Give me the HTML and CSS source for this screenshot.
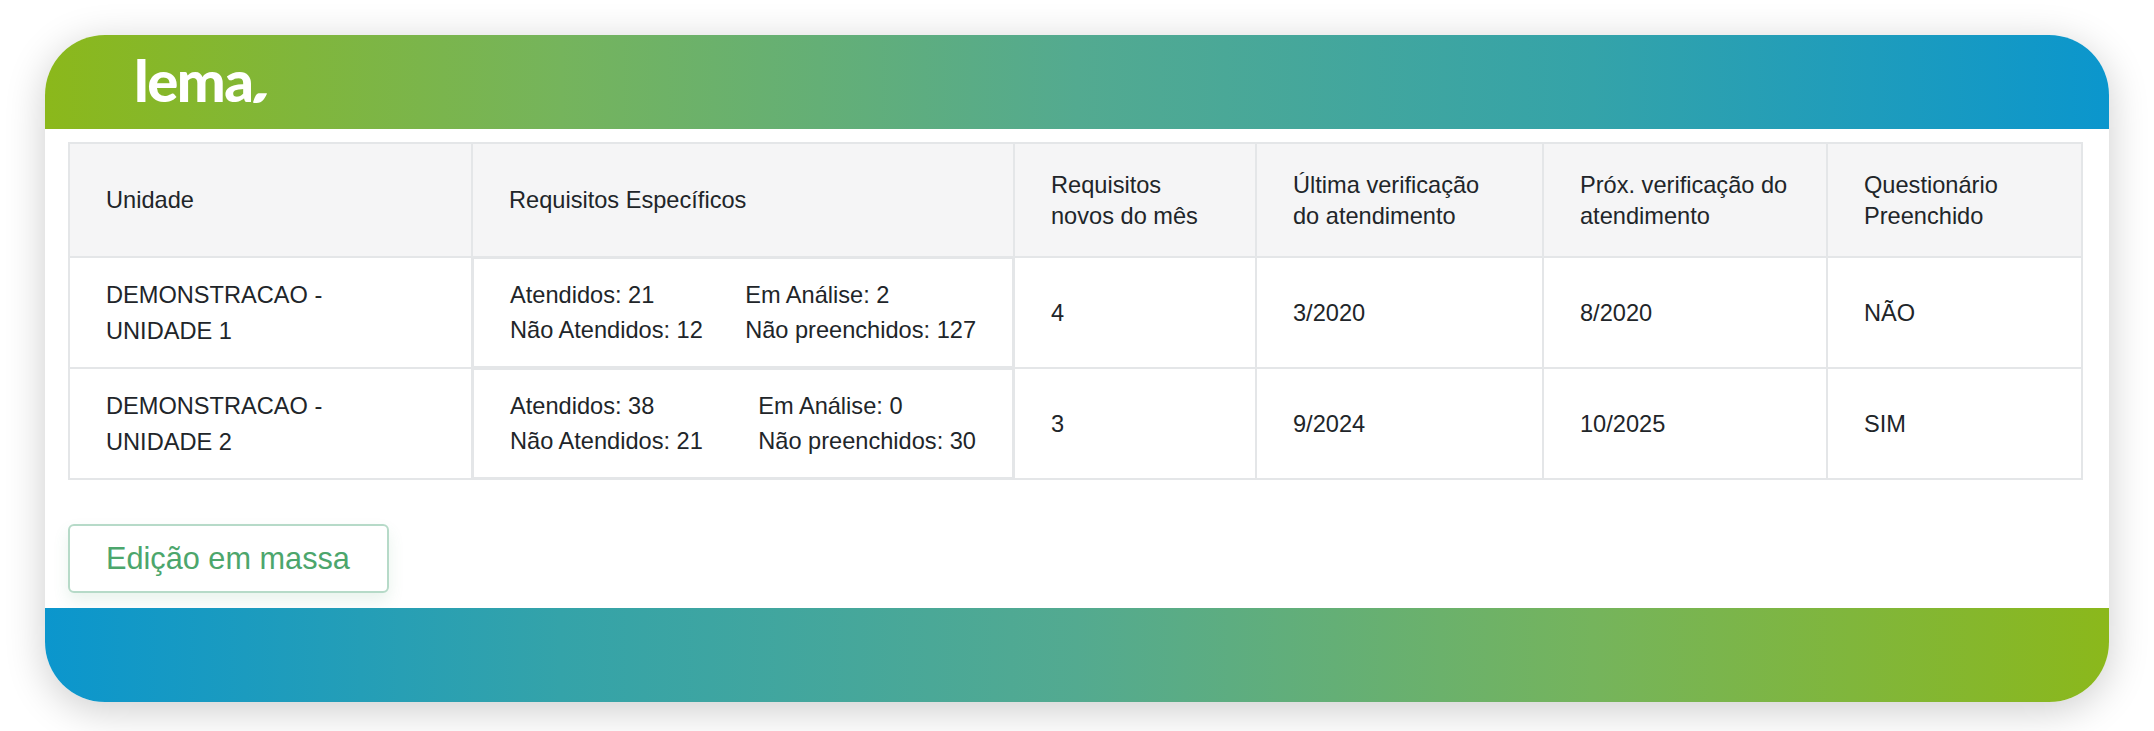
FILE: index.html
```html
<!DOCTYPE html>
<html lang="pt-BR">
<head>
<meta charset="utf-8">
<title>Lema</title>
<link rel="stylesheet" href="styles.css">
</head>
<body>
<div class="card">
  <header class="top">
    <div class="logo"><span class="logo-word">lema</span><svg class="logo-mark" viewBox="0 0 14 10" width="14" height="10"><path d="M5.5 .2L13.2 .2C13.9 .2 14.1 .6 13.7 1.2C12.2 4.6 9.4 10 3.6 10L1 10C.2 10 -.1 9.5 .2 8.8C1.2 5.8 2.6 1 5.5 .2Z"/></svg></div>
  </header>
  <main class="content">
    <table class="grid">
      <colgroup>
        <col class="c1"><col class="c2"><col class="c3"><col class="c4"><col class="c5"><col class="c6">
      </colgroup>
      <thead>
        <tr>
          <th>Unidade</th>
          <th>Requisitos Específicos</th>
          <th>Requisitos<br>novos do mês</th>
          <th>Última verificação<br>do atendimento</th>
          <th>Próx. verificação do<br>atendimento</th>
          <th>Questionário<br>Preenchido</th>
        </tr>
      </thead>
      <tbody>
        <tr>
          <td>DEMONSTRACAO -<br>UNIDADE 1</td>
          <td class="req-cell"><div class="req"><span>Atendidos: 21</span><span>Em Análise: 2</span><span>Não Atendidos: 12</span><span>Não preenchidos: 127</span></div></td>
          <td>4</td>
          <td>3/2020</td>
          <td>8/2020</td>
          <td>NÃO</td>
        </tr>
        <tr>
          <td>DEMONSTRACAO -<br>UNIDADE 2</td>
          <td class="req-cell"><div class="req"><span>Atendidos: 38</span><span>Em Análise: 0</span><span>Não Atendidos: 21</span><span>Não preenchidos: 30</span></div></td>
          <td>3</td>
          <td>9/2024</td>
          <td>10/2025</td>
          <td>SIM</td>
        </tr>
      </tbody>
    </table>
    <button class="mass-edit" type="button">Edição em massa</button>
  </main>
  <footer class="bottom"></footer>
</div>
</body>
</html>
```
FILE: styles.css
```css
html, body {
  margin: 0;
  height: 731px;
  overflow: hidden;
  background: #ffffff;
}
body {
  padding: 35px 45px 0;
  box-sizing: border-box;
  font-family: "Liberation Sans", Arial, sans-serif;
  color: #212529;
}
.card {
  height: 667px;
  display: flex;
  flex-direction: column;
  border-radius: 60px;
  background: #ffffff;
  box-shadow: 0 8px 40px rgba(0, 0, 0, 0.2);
  overflow: hidden;
}
.top {
  height: 94px;
  flex: none;
  padding-left: 89px;
  background: linear-gradient(90deg, #8bb81b 0%, #75b45c 25%, #53aa90 50%, #34a3a9 75%, #0b96cd 100%);
}
.logo {
  display: flex;
  align-items: flex-end;
  height: 74px;
}
.logo-word {
  font-family: Lato, sans-serif;
  font-weight: 900;
  font-size: 58px;
  line-height: 58px;
  letter-spacing: -1.5px;
  color: #ffffff;
}
.logo-mark {
  fill: #ffffff;
  margin: 0 0 6px 1px;
}
.content {
  flex: 1;
  padding: 13px 23px 0;
}
.grid {
  width: 2013px;
  table-layout: fixed;
  border-collapse: collapse;
  font-size: 23.6px;
  line-height: 31px;
}
.c1 { width: 403px; }
.c2 { width: 542px; }
.c3 { width: 242px; }
.c4 { width: 287px; }
.c5 { width: 284px; }
.c6 { width: 255px; }
th, td {
  border: 2px solid #e4e6e8;
  padding: 0 36px;
  text-align: left;
  font-weight: 400;
}
th {
  height: 111px;
  padding-top: 1px;
  background: #f5f5f6;
}
td {
  height: 109px;
  background: #ffffff;
  line-height: 36px;
}
.grid .req-cell {
  padding: 0;
}
.req {
  display: grid;
  grid-template-columns: auto auto;
  justify-content: space-between;
  align-content: center;
  height: 109px;
  box-sizing: border-box;
  padding: 0 36px 0 36px;
  border: 1px solid #e4e6e8;
  line-height: 35px;
}
.mass-edit {
  display: block;
  margin-top: 44px;
  width: 321px;
  height: 69px;
  padding: 0 0 0 36px;
  text-align: left;
  border: 2px solid #b6dac8;
  border-radius: 6px;
  background: #ffffff;
  color: #4ca66c;
  font-family: inherit;
  font-size: 30.7px;
  box-shadow: 0 8px 16px rgba(70, 160, 110, 0.12);
}
.bottom {
  height: 94px;
  flex: none;
  background: linear-gradient(90deg, #0b96cd 0%, #34a3a9 25%, #53aa90 50%, #75b45c 75%, #8bb81b 100%);
}
```
